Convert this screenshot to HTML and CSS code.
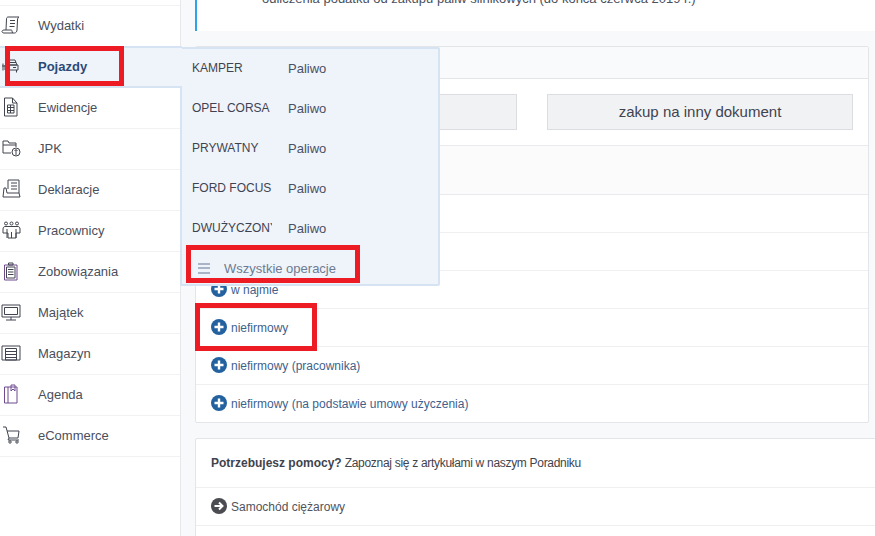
FILE: index.html
```html
<!DOCTYPE html>
<html lang="pl">
<head>
<meta charset="utf-8">
<title>Pojazdy</title>
<link rel="stylesheet" href="styles.css">
</head>
<body>
<div class="app">
  <nav class="sidebar">
    <a class="nav-item"><svg class="nav-icon" viewBox="0 0 18 18"><path d="M6 1h11c-1 .5-1.500 1.500-1.500 3L15 14c0 1.500-1 3-2.500 3H2c-1.500 0-2-1-2-1.500S.5 14 2 14h7.500c.5 0 .5 1.500 1 3M6 1c-1 0-1.500 1-1.500 2L4 14M8 4.500h5M8 7.500h5M7.500 10.500h5"/></svg><span>Wydatki</span></a>
    <a class="nav-item active"><svg class="nav-icon" viewBox="0 0 18 18"><path d="M6 3h7l2 5H4zM3 8h13v5H3zM4.500 13v2.500M14.500 13v2.500M5 10.500h3M11 10.500h3M1 6.500v7M0 9h3M5 5.500h9"/></svg><span>Pojazdy</span></a>
    <a class="nav-item"><svg class="nav-icon" viewBox="0 0 18 18"><path d="M2.500 0h8l4.500 5v13H2.500zM10.500 0v5H15M5.500 7H12v8H5.500zM5.500 9.500H12M5.500 12.500H12M8.500 7v8"/></svg><span>Ewidencje</span></a>
    <a class="nav-item"><svg class="nav-icon" viewBox="0 0 18 18"><path d="M1 14V2h5l1 2h7v4M1 14h8M1 6h13"/><circle cx="14" cy="13" r="4"/><path d="M14 16v-5.500M12.500 12l1.500-1.500 1.500 1.500"/></svg><span>JPK</span></a>
    <a class="nav-item"><svg class="nav-icon" viewBox="0 0 18 18"><path d="M6 9V0h11v13M9 3h6M9 6h6M9 9h6M4 8H2l-1 9h17l-1-4H5z"/></svg><span>Deklaracje</span></a>
    <a class="nav-item"><svg class="nav-icon" viewBox="0 0 18 18"><circle cx="4" cy="2.500" r="1.500"/><circle cx="9.500" cy="2.500" r="1.500"/><circle cx="15" cy="2.500" r="1.500"/><path d="M1 12V8c0-1.500 1-2.500 2-2.500h13c1 0 2 1 2 2.500v4h-4v5H6v-5zM5 8v9M14 8v9M9.500 11v6"/></svg><span>Pracownicy</span></a>
    <a class="nav-item"><svg class="nav-icon" viewBox="0 0 18 18"><path class="violet" d="M2.500 3H15v15H2.500z"/><path d="M6.500 3V1h4.500v2zM4.500 5H13v11H4.500zM6 7.500h5.500M6 10h5.500M6 12.500h5.500"/></svg><span>Zobowiązania</span></a>
    <a class="nav-item"><svg class="nav-icon" viewBox="0 0 18 18"><path d="M0 2h18v12H0zM2.500 4.500h13v7h-13zM9 14v3M4 17h10"/></svg><span>Majątek</span></a>
    <a class="nav-item"><svg class="nav-icon" viewBox="0 0 18 18"><path d="M0 2h18v14H0zM3.500 4.500h11V16h-11zM3.500 7.500h11M3.500 10.500h11M3.500 13.500h11"/></svg><span>Magazyn</span></a>
    <a class="nav-item"><svg class="nav-icon" viewBox="0 0 18 18"><path class="violet" d="M2.500 2H15v16H2.500zM6 2v16M9 0h4v6l-2-2-2 2z"/></svg><span>Agenda</span></a>
    <a class="nav-item"><svg class="nav-icon" viewBox="0 0 18 18"><path d="M1 1h3l3 11h9l1-7H5M7 12l-1 2h11"/><circle cx="8" cy="16" r="1.200"/><circle cx="15" cy="16" r="1.200"/></svg><span>eCommerce</span></a>
  </nav>
  <main class="content">
    <div class="alert"><p>odliczenia podatku od zakupu paliw silnikowych (do końca czerwca 2019 r.)</p></div>
    <section class="panel">
      <div class="panel-head"></div>
      <div class="panel-actions">
        <button class="btn" type="button"></button>
        <button class="btn" type="button">zakup na inny dokument</button>
      </div>
      <div class="panel-sub"></div>
      <ul class="rows">
        <li class="row"></li>
        <li class="row"></li>
        <li class="row"><svg class="circle-icon plus" viewBox="0 0 16 16"><circle cx="8" cy="8" r="8"/><path d="M8 3.500v9M3.500 8h9"/></svg>w najmie</li>
        <li class="row"><svg class="circle-icon plus" viewBox="0 0 16 16"><circle cx="8" cy="8" r="8"/><path d="M8 3.500v9M3.500 8h9"/></svg>niefirmowy</li>
        <li class="row"><svg class="circle-icon plus" viewBox="0 0 16 16"><circle cx="8" cy="8" r="8"/><path d="M8 3.500v9M3.500 8h9"/></svg>niefirmowy (pracownika)</li>
        <li class="row"><svg class="circle-icon plus" viewBox="0 0 16 16"><circle cx="8" cy="8" r="8"/><path d="M8 3.500v9M3.500 8h9"/></svg>niefirmowy (na podstawie umowy użyczenia)</li>
      </ul>
    </section>
    <section class="panel panel-help">
      <div class="help-head"><strong>Potrzebujesz pomocy?</strong> <span class="help-text">Zapoznaj się z artykułami w naszym Poradniku</span></div>
      <ul class="rows">
        <li class="row row-dark"><svg class="circle-icon arrow" viewBox="0 0 16 16"><circle cx="8" cy="8" r="8"/><path d="M3.500 8h8M8 4.500 11.500 8 8 11.500"/></svg>Samochód ciężarowy</li>
        <li class="row row-dark"><svg class="circle-icon arrow" viewBox="0 0 16 16"><circle cx="8" cy="8" r="8"/><path d="M3.500 8h8M8 4.500 11.500 8 8 11.500"/></svg></li>
      </ul>
    </section>
  </main>
</div>
<div class="flyout">
  <ul class="flyout-list">
    <li class="flyout-row"><span class="car">KAMPER</span><span class="fuel">Paliwo</span></li>
    <li class="flyout-row"><span class="car">OPEL CORSA</span><span class="fuel">Paliwo</span></li>
    <li class="flyout-row"><span class="car">PRYWATNY</span><span class="fuel">Paliwo</span></li>
    <li class="flyout-row"><span class="car">FORD FOCUS</span><span class="fuel">Paliwo</span></li>
    <li class="flyout-row"><span class="car">DWUŻYCZONY</span><span class="fuel">Paliwo</span></li>
  </ul>
  <div class="flyout-all"><span class="burger"></span>Wszystkie operacje</div>
</div>
<div class="mark mark-pojazdy"></div>
<div class="mark mark-all"></div>
<div class="mark mark-niefirmowy"></div>
</body>
</html>
```
FILE: styles.css
```css
* { box-sizing: border-box; }
html, body { margin: 0; height: 536px; overflow: hidden; }
body { font-family: "Liberation Sans", Arial, sans-serif; font-size: 12px; color: #4a4f5c; background: #fff; position: relative; }
ul { list-style: none; margin: 0; padding: 0; }
.app { display: flex; height: 536px; }
.sidebar { width: 181px; flex: none; border-right: 1px solid #e6e8ec; padding-top: 5px; background: #fff; }
.nav-item { display: flex; align-items: center; height: 41px; border-top: 1px solid #f1f2f4; color: #4a4f5c; padding: 0 0 2px 2px; font-size: 13px; }
.nav-item:last-child { height: 42px; border-bottom: 1px solid #f1f2f4; }
.nav-item span { margin-left: 18px; }
.nav-item.active { background: #eff4fb; border-top: 2px solid #d5e3f3; border-bottom: 2px solid #d5e3f3; color: #2a4a78; font-weight: bold; width: 182px; height: 42px; margin-bottom: -1px; position: relative; z-index: 2; }
.nav-icon { width: 18px; height: 18px; flex: none; fill: none; stroke: #40444f; stroke-width: 1; overflow: visible; }
.nav-icon .violet { stroke: #6f4a8e; }
.content { flex: 1; min-width: 0; background: #f8f9fb; padding-left: 14px; display: flex; flex-direction: column; overflow: hidden; }
.content > * { flex: none; }
.alert { height: 31px; background: #fff; border-left: 2px solid #2ea3e8; padding-left: 65px; font-size: 13px; color: #4a4f5c; overflow: hidden; }
.alert p { margin: -9px 0 0; line-height: 16px; }
.panel { margin-top: 15px; width: 674px; background: #fff; border: 1px solid #e3e5e9; border-radius: 2px; }
.panel-head { height: 32px; background: #f9fafc; border-bottom: 1px solid #e3e5e9; }
.panel-actions { height: 67px; display: flex; justify-content: space-between; align-items: flex-start; padding: 15px 15px 0; border-bottom: 1px solid #e9eaed; }
.btn { width: 306px; height: 36px; background: #f1f2f4; border: 1px solid #dcdde0; font-family: inherit; font-size: 15px; color: #3f4350; padding: 0 0 2px; }
.panel-sub { height: 49px; background: #fbfbfb; border-bottom: 1px solid #e9eaed; }
.row { display: flex; align-items: center; height: 38px; padding-left: 15px; border-bottom: 1px solid #eeeff1; color: #3f5f8c; }
.row:last-child { border-bottom: 0; height: 37px; }
.circle-icon { width: 16px; height: 16px; flex: none; margin-right: 4px; position: relative; top: -1px; }
.circle-icon path { fill: none; stroke: #fff; stroke-width: 2.400; }
.plus circle { fill: #23629f; }
.arrow circle { fill: #4a4c52; }
.arrow path { stroke-width: 2; }
.panel-help { width: 700px; }
.help-head { height: 49px; display: flex; align-items: center; gap: 3px; padding-left: 15px; border-bottom: 1px solid #eeeff1; color: #3f434c; }
.help-text { letter-spacing: -0.3px; }
.row-dark { color: #50535c; }
.row-dark:last-child { height: 38px; border-bottom: 1px solid #eeeff1; }
.flyout { position: absolute; left: 180px; top: 47px; width: 260px; height: 239px; background: #eff4fb; border: 2px solid #d5e3f3; border-radius: 0 2px 2px 0; }
.flyout-row { display: flex; height: 40px; align-items: center; padding-bottom: 2px; }
.car { width: 80px; margin: 0 16px 0 10px; overflow: hidden; white-space: nowrap; color: #3f4350; }
.fuel { color: #4a5064; font-size: 13px; }
.flyout-all { display: flex; align-items: center; margin-top: 4px; height: 30px; padding-left: 16px; color: #6d7b92; font-size: 13px; }
.burger { display: block; width: 12px; height: 11px; margin-right: 14px; border-top: 2px solid #a9b5c6; border-bottom: 2px solid #a9b5c6; position: relative; }
.burger::after { content: ""; position: absolute; left: 0; right: 0; top: 2px; height: 2px; background: #a9b5c6; }
.mark { position: absolute; border: 5px solid #ed1c24; z-index: 3; }
.mark-pojazdy { left: 5px; top: 46px; width: 119px; height: 40px; }
.mark-all { left: 186px; top: 245px; width: 174px; height: 38px; }
.mark-niefirmowy { left: 195px; top: 303px; width: 122px; height: 48px; }
```
